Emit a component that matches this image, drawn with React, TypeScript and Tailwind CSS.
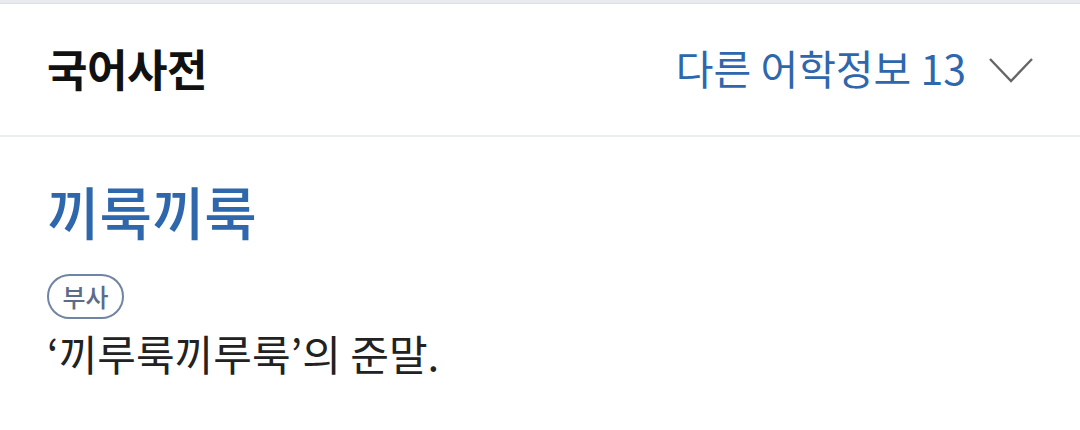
export default function App() {
  const font = { fontFamily: '"Noto Sans CJK KR", "Noto Sans", sans-serif' };
  return (
    <div className="w-[1080px] h-[430px] bg-white overflow-hidden" style={font}>
      <div className="h-[3px] bg-[#e9eaee] border-b border-[#dcdee3] box-content" />
      <div className="h-[133px] flex items-center justify-between pl-[47px] pr-[46px] border-b-2 border-[#eceeee]">
        <h1 className="text-[44px] font-bold text-[#111] leading-none tracking-[-0.5px] -mt-[4px]">국어사전</h1>
        <div className="flex items-center gap-[22px]">
          <span className="text-[41px] text-[#2f67ad] leading-none -mt-[4px]">다른 어학정보 13</span>
          <svg width="46" height="28" viewBox="0 0 46 28" fill="none">
            <path d="M2 3 L23 25 L44 3" stroke="#666" strokeWidth="2.4" />
          </svg>
        </div>
      </div>
      <div className="pl-[47px] pt-[45px]">
        <h2 className="text-[57px] font-medium text-[#2f67ad] leading-none">끼룩끼룩</h2>
        <div className="mt-[35px] flex">
          <span className="inline-flex items-center justify-center h-[45px] w-[77px] rounded-full border-2 border-[#7084a3] text-[25px] font-medium text-[#5d6c86] leading-none">
            부사
          </span>
        </div>
        <p className="mt-[13px] text-[42px] text-[#222] leading-none">‘끼루룩끼루룩’의 준말.</p>
      </div>
    </div>
  );
}
